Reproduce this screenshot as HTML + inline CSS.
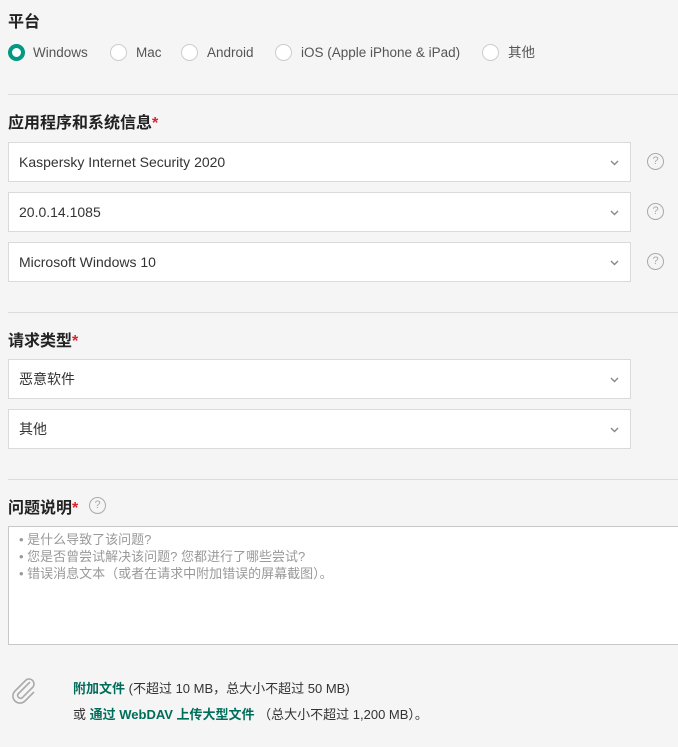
<!DOCTYPE html>
<html><head><meta charset="utf-8"><style>
body{margin:0;width:678px;height:747px;background:#f5f5f5;font-family:"Liberation Sans","Noto Sans CJK SC",sans-serif;color:#333;position:relative;overflow:hidden}
.a{position:absolute}
h3{position:absolute;margin:0;font-size:16px;font-weight:bold;color:#222;left:8px}
h3 i{color:#e0202c;font-style:normal}
.hr{position:absolute;left:8px;right:0;height:1px;background:#dcdcdc}
.sel{position:absolute;left:8px;width:621px;height:38px;background:#fff;border:1px solid #dadada;font-size:14px;line-height:38px;color:#333;box-sizing:content-box}
.sel span{padding-left:10px}
.sel svg{position:absolute;right:11px;top:17px}
.q{position:absolute;width:15px;height:15px;border:1px solid #aaa;border-radius:50%;font-size:11px;line-height:15px;text-align:center;color:#aaa}
.r{position:absolute;top:44px;width:15px;height:15px;border:1px solid #ccc;border-radius:50%;background:#fff}
.lbl{position:absolute;top:44px;height:18px;line-height:18px;font-size:13.5px;color:#555}
a{color:#006d5b;font-weight:bold;text-decoration:none}
</style></head><body>
<h3 style="top:8px">平台</h3>
<div class="r" style="left:8px;border:4px solid #009982;width:9px;height:9px"></div>
<div class="lbl" style="left:33px">Windows</div>
<div class="r" style="left:110px"></div><div class="lbl" style="left:136px">Mac</div>
<div class="r" style="left:181px"></div><div class="lbl" style="left:207px">Android</div>
<div class="r" style="left:275px"></div><div class="lbl" style="left:301px">iOS (Apple iPhone &amp; iPad)</div>
<div class="r" style="left:482px"></div><div class="lbl" style="left:508px">其他</div>
<div class="hr" style="top:94px"></div>
<h3 style="top:109px">应用程序和系统信息<i>*</i></h3>
<div class="sel" style="top:142px"><span>Kaspersky Internet Security 2020</span><svg width="9" height="6"><path d="M1 1l3.5 3.5 3.5-3.5" stroke="#888" fill="none" stroke-width="1.4"/></svg></div>
<div class="q" style="left:647px;top:153px">?</div>
<div class="sel" style="top:192px"><span>20.0.14.1085</span><svg width="9" height="6"><path d="M1 1l3.5 3.5 3.5-3.5" stroke="#888" fill="none" stroke-width="1.4"/></svg></div>
<div class="q" style="left:647px;top:203px">?</div>
<div class="sel" style="top:242px"><span>Microsoft Windows 10</span><svg width="9" height="6"><path d="M1 1l3.5 3.5 3.5-3.5" stroke="#888" fill="none" stroke-width="1.4"/></svg></div>
<div class="q" style="left:647px;top:253px">?</div>
<div class="hr" style="top:312px"></div>
<h3 style="top:327px">请求类型<i>*</i></h3>
<div class="sel" style="top:359px"><span>恶意软件</span><svg width="9" height="6"><path d="M1 1l3.5 3.5 3.5-3.5" stroke="#888" fill="none" stroke-width="1.4"/></svg></div>
<div class="sel" style="top:409px"><span>其他</span><svg width="9" height="6"><path d="M1 1l3.5 3.5 3.5-3.5" stroke="#888" fill="none" stroke-width="1.4"/></svg></div>
<div class="hr" style="top:479px"></div>
<h3 style="top:494px">问题说明<i>*</i></h3>
<div class="q" style="left:89px;top:497px">?</div>
<div class="a" style="left:8px;top:526px;width:680px;height:119px;background:#fff;border:1px solid #c8c8c8;font-size:13px;color:#999;line-height:17px;padding:4px 0 0 10px;box-sizing:border-box">• 是什么导致了该问题?<br>• 您是否曾尝试解决该问题? 您都进行了哪些尝试?<br>• 错误消息文本（或者在请求中附加错误的屏幕截图）。</div>
<svg class="a" style="left:10px;top:677px" width="28" height="28" viewBox="0 0 28 28"><path d="M20 5 L8 17 a3 3 0 0 0 4 4 L23 10 a5 5 0 0 0 -7 -7 L5 14 a7 7 0 0 0 10 10 L24 15" stroke="#aaa" fill="none" stroke-width="1.6"/></svg>
<div class="a" style="left:73px;top:678px;font-size:13px;color:#333"><a>附加文件</a> (不超过 10 MB，总大小不超过 50 MB)</div>
<div class="a" style="left:73px;top:704px;font-size:13px;color:#333">或 <a>通过 WebDAV 上传大型文件</a> （总大小不超过 1,200 MB）。</div>
</body></html>
